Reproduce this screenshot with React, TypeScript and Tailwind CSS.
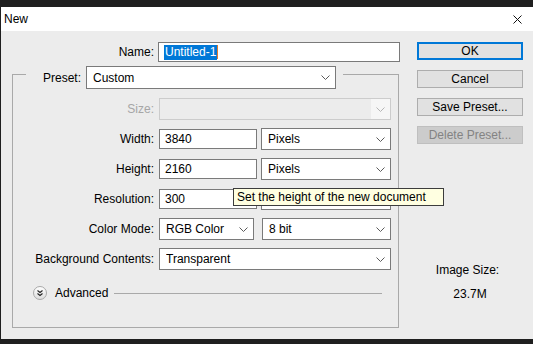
import React from "react";

const Chevron = ({ light }: { light?: boolean }) => (
  <svg width="9" height="5" viewBox="0 0 9 5" className="shrink-0">
    <path d="M0.5 0.5 L4.5 4.5 L8.5 0.5" fill="none" stroke={light ? "#b4b4b4" : "#5a5a5a"} strokeWidth="1" />
  </svg>
);

const Select = ({ value, w, h = "h-[22px]" }: { value: string; w: string; h?: string }) => (
  <div className={`${w} ${h} bg-white border border-[#7a7a7a] flex items-center pl-[6px] pr-[5px] shrink-0`}>
    <span className="flex-1 whitespace-nowrap overflow-hidden">{value}</span>
    <Chevron />
  </div>
);

const Input = ({ value, w }: { value: string; w: string }) => (
  <div className={`${w} h-[20px] bg-white border border-[#7a7a7a] flex items-center pl-[5px] shrink-0`}>
    <span>{value}</span>
  </div>
);

const Row = ({ label, children, disabled }: { label: string; children: React.ReactNode; disabled?: boolean }) => (
  <div className="h-[22px] flex items-center">
    <div className={`w-[142px] text-right pr-[1px] ${disabled ? "text-[#a6a6a6]" : "text-black"}`}>{label}</div>
    <div className="flex items-center gap-[4px] ml-[4px]">{children}</div>
  </div>
);

const Button = ({ label, primary, disabled }: { label: string; primary?: boolean; disabled?: boolean }) => (
  <div
    className={`w-[106px] h-[18px] flex items-center justify-center ${
      primary
        ? "border-2 border-[#0078d7] bg-[#e1e1e1]"
        : disabled
        ? "border border-[#bfbfbf] bg-[#cccccc] text-[#838383]"
        : "border border-[#adadad] bg-[#e1e1e1]"
    }`}
  >
    {label}
  </div>
);

export default function App() {
  return (
    <div
      className="w-[533px] h-[344px] bg-[#1f1f1f] pt-[7px] text-[12px] leading-[16px] text-black overflow-hidden"
      style={{ fontFamily: '"Liberation Sans", Arial, sans-serif' }}
    >
      <div className="h-[332px] border-l border-[#1f1f1f] flex flex-col">
        {/* Title bar */}
        <div className="h-[24px] bg-white flex items-center justify-between pl-[3px] pr-[11px]">
          <span className="text-[12px]">New</span>
          <svg width="9" height="9" viewBox="0 0 9 9">
            <path d="M0.5 0.5 L8.5 8.5 M8.5 0.5 L0.5 8.5" stroke="#111" strokeWidth="1" />
          </svg>
        </div>
        {/* Body */}
        <div className="flex-1 bg-[#ececec] flex">
          {/* Left column */}
          <div className="w-[410px] pl-[11px] pt-[11px]">
            <div className="h-[20px] flex items-center">
              <div className="w-[143px] text-right pr-[1px]">Name:</div>
              <div className="ml-[3px] w-[242px] h-[20px] bg-white border border-[#7a7a7a] flex items-center pl-[5px]">
                <span className="bg-[#0078d7] text-white leading-[15px] px-[1px]">Untitled-1</span>
                <span className="w-px h-[14px] bg-[#e07a2a]" />
              </div>
            </div>
            {/* Group box */}
            <div className="mt-[12px] w-[387px] h-[254px] border border-[#a9a9a9] flex flex-col">
              <div className="-mt-[9px] ml-[13px] w-[317px] h-[23px] bg-[#ececec] flex items-center">
                <div className="w-[56px] text-right pr-[1px]">Preset:</div>
                <div className="ml-[4px]">
                  <Select value="Custom" w="w-[250px]" h="h-[23px]" />
                </div>
              </div>
              <div className="mt-[9px] flex flex-col gap-[8px]">
                <Row label="Size:" disabled>
                  <div className="w-[232px] h-[22px] bg-[#ececec] border border-[#cccccc] flex items-center justify-end">
                    <div className="w-[19px] h-full bg-[#f6f6f6] flex items-center justify-center">
                      <Chevron light />
                    </div>
                  </div>
                </Row>
                <Row label="Width:">
                  <Input value="3840" w="w-[98px]" />
                  <Select value="Pixels" w="w-[130px]" />
                </Row>
                <Row label="Height:">
                  <Input value="2160" w="w-[98px]" />
                  <Select value="Pixels" w="w-[130px]" />
                </Row>
                <Row label="Resolution:">
                  <Input value="300" w="w-[98px]" />
                  <Select value="" w="w-[130px]" />
                </Row>
                <Row label="Color Mode:">
                  <Select value="RGB Color" w="w-[95px]" />
                  <div className="ml-[4px]">
                    <Select value="8 bit" w="w-[129px]" />
                  </div>
                </Row>
                <Row label="Background Contents:">
                  <Select value="Transparent" w="w-[232px]" />
                </Row>
              </div>
              <div className="mt-[16px] h-[14px] pl-[20px] pr-[16px] flex items-center">
                <svg width="14" height="14" viewBox="0 0 14 14" className="shrink-0">
                  <defs>
                    <linearGradient id="g" x1="0" y1="0" x2="0" y2="1">
                      <stop offset="0" stopColor="#ffffff" />
                      <stop offset="1" stopColor="#dcdcdc" />
                    </linearGradient>
                  </defs>
                  <circle cx="7" cy="7" r="6.5" fill="url(#g)" stroke="#a8a8a8" />
                  <path d="M4.5 4.5 L7 6.5 L9.5 4.5 M4.5 7.5 L7 9.5 L9.5 7.5" fill="none" stroke="#222" strokeWidth="1.1" />
                </svg>
                <span className="ml-[8px]">Advanced</span>
                <div className="flex-1 h-px bg-[#a9a9a9] ml-[6px]" />
              </div>
            </div>
          </div>
          {/* Right column */}
          <div className="pl-[6px] pt-[11px] flex flex-col">
            <div className="flex flex-col gap-[10px]">
              <Button label="OK" primary />
              <Button label="Cancel" />
              <Button label="Save Preset..." />
              <Button label="Delete Preset..." disabled />
            </div>
            <div className="mt-[118px] w-[101px] text-center">Image Size:</div>
            <div className="mt-[8px] w-[106px] text-center">23.7M</div>
          </div>
        </div>
      </div>
      {/* Tooltip */}
      <div className="absolute left-[233px] top-[188px] w-[211px] h-[18px] bg-[#ffffe1] border border-[#3c3c3c] pl-[3px] flex items-center whitespace-nowrap">
        Set the height of the new document
      </div>
    </div>
  );
}
